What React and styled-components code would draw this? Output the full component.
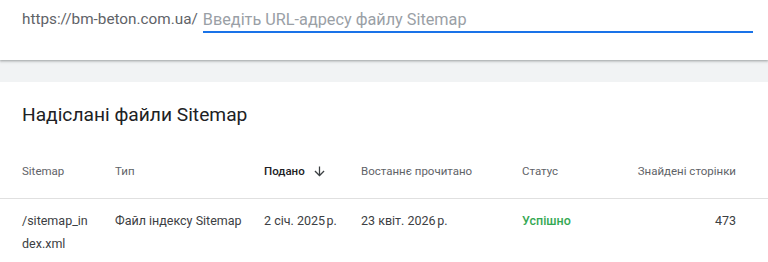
import React from 'react'
import styled, { createGlobalStyle } from 'styled-components'

const GlobalStyle = createGlobalStyle`
    html, body {
        margin: 0;
        padding: 0;
        background: #f1f3f4;
        font-family: Roboto, "Noto Sans", Arial, sans-serif;
    }
`

const Page = styled.div`
    width: 768px;
    height: 262px;
    overflow: hidden;
    background: #f1f3f4;
`

const SubmitBar = styled.div`
    height: 60px;
    box-sizing: border-box;
    padding: 7px 15px 0 22px;
    background: #fff;
    box-shadow: 0 1px 2px rgba(60, 64, 67, 0.35), 0 1px 3px 1px rgba(60, 64, 67, 0.12);
    display: flex;
    align-items: flex-start;
`

const Prefix = styled.span`
    font-size: 15.3px;
    line-height: 24px;
    color: #5f6368;
    margin-right: 5px;
    white-space: nowrap;
`

const UrlInput = styled.input`
    flex: 1;
    height: 24px;
    padding: 0;
    border: 0;
    border-bottom: 2px solid #1a73e8;
    outline: none;
    font-family: inherit;
    font-size: 16.25px;
    color: #202124;
    background: transparent;

    &::placeholder {
        color: #9aa0a6;
    }
`

const Card = styled.section`
    margin-top: 22px;
    background: #fff;
    padding-top: 21px;
    height: 200px;
`

const Title = styled.h2`
    margin: 0 0 0 22px;
    font-size: 19.2px;
    line-height: 24px;
    font-weight: 400;
    color: #202124;
`

const Row = styled.div`
    display: grid;
    grid-template-columns: 93px 149px 97px 161px 1fr 140px;
    padding: 0 32px 0 22px;
    border-bottom: ${p => (p.$head ? '1px solid #e0e0e0' : 'none')};
    margin-top: ${p => (p.$head ? '36px' : '0')};
`

const HeadCell = styled.div`
    font-size: 11.5px;
    line-height: 16px;
    padding-bottom: 19px;
    color: ${p => (p.$active ? '#202124' : '#5f6368')};
    font-weight: ${p => (p.$active ? 500 : 400)};
    text-align: ${p => (p.$right ? 'right' : 'left')};
    display: flex;
    align-items: center;
    justify-content: ${p => (p.$right ? 'flex-end' : 'flex-start')};
    gap: 7px;
`

const Cell = styled.div`
    font-size: 12.5px;
    line-height: 23px;
    padding: 10px 0 0 0;
    max-width: ${p => (p.$wrap ? '66px' : 'none')};
    color: ${p => (p.$ok ? '#34a853' : '#3c4043')};
    font-weight: ${p => (p.$ok ? 500 : 400)};
    text-align: ${p => (p.$right ? 'right' : 'left')};
    word-break: ${p => (p.$wrap ? 'break-all' : 'normal')};
`

const SortArrow = () => (
    <svg width="15" height="15" viewBox="0 0 24 24" fill="#3c4043">
        <path d="M20 12l-1.41-1.41L13 16.17V4h-2v12.17l-5.58-5.59L4 12l8 8 8-8z" />
    </svg>
)

const sitemaps = [
    {
        path: '/sitemap_index.xml',
        type: 'Файл індексу Sitemap',
        submitted: '2 січ. 2025\u202Fр.',
        lastRead: '23 квіт. 2026\u202Fр.',
        status: 'Успішно',
        pages: 473,
    },
]

export default function App() {
    return (
        <Page>
            <GlobalStyle />
            <SubmitBar>
                <Prefix>https://bm-beton.com.ua/</Prefix>
                <UrlInput placeholder="Введіть URL-адресу файлу Sitemap" />
            </SubmitBar>
            <Card>
                <Title>Надіслані файли Sitemap</Title>
                <Row $head>
                    <HeadCell>Sitemap</HeadCell>
                    <HeadCell>Тип</HeadCell>
                    <HeadCell $active>Подано <SortArrow /></HeadCell>
                    <HeadCell>Востаннє прочитано</HeadCell>
                    <HeadCell>Статус</HeadCell>
                    <HeadCell $right>Знайдені сторінки</HeadCell>
                </Row>
                {sitemaps.map(s => (
                    <Row key={s.path}>
                        <Cell $wrap>{s.path}</Cell>
                        <Cell>{s.type}</Cell>
                        <Cell>{s.submitted}</Cell>
                        <Cell>{s.lastRead}</Cell>
                        <Cell $ok>{s.status}</Cell>
                        <Cell $right>{s.pages}</Cell>
                    </Row>
                ))}
            </Card>
        </Page>
    )
}
